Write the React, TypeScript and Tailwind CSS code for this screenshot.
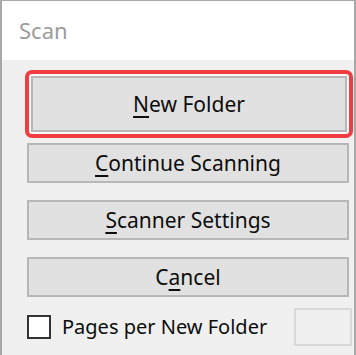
const font = { fontFamily: '"Noto Sans", "Open Sans", sans-serif' };

const Btn = ({ k, rest, pre = "" }: { k: string; rest: string; pre?: string }) => (
  <button className="h-[40px] w-full border-2 border-[#b7b7b7] bg-[#e1e1e1] text-[21px] text-[#0d0d0d] leading-none">
    {pre}
    <span className="underline underline-offset-[4px] decoration-2">{k}</span>
    {rest}
  </button>
);

export default function App() {
  return (
    <div
      className="w-[356px] h-[355px] flex flex-col border-l-2 border-r-2 border-t border-[#a9a9a9] overflow-hidden"
      style={font}
    >
      {/* title */}
      <div className="h-[59px] bg-white flex items-center pl-[17px] text-[22px] text-[#9c9c9c]">Scan</div>

      <div className="flex-1 bg-[#f0f0f0] pl-[25px] pr-[5px] pt-[10px]">
        <div className="flex flex-col">
          <div className="ml-[-2px] mr-[-4px] border-4 border-[#f03c43] rounded-[7px] p-[2px] bg-[#f7f7f7]">
            <button className="h-[56px] w-full border-2 border-[#b7b7b7] bg-[#e1e1e1] text-[21px] text-[#0d0d0d] leading-none">
              <span className="underline underline-offset-[4px] decoration-2">N</span>ew Folder
            </button>
          </div>
          <div className="mt-[5px] flex flex-col gap-[17px]">
            <Btn k="C" rest="ontinue Scanning" />
            <Btn k="S" rest="canner Settings" />
            <Btn pre="C" k="a" rest="ncel" />
          </div>
          <div className="mt-[11px] flex items-center">
            <div className="w-[24px] h-[24px] border-2 border-[#333] bg-white" />
            <span className="ml-[11px] text-[20px] text-[#0d0d0d]">Pages per New Folder</span>
            <div className="ml-auto mr-[-3px] w-[58px] h-[38px] border-2 border-[#d9d9d9] bg-[#f0f0f0]" />
          </div>
        </div>
      </div>
    </div>
  );
}
